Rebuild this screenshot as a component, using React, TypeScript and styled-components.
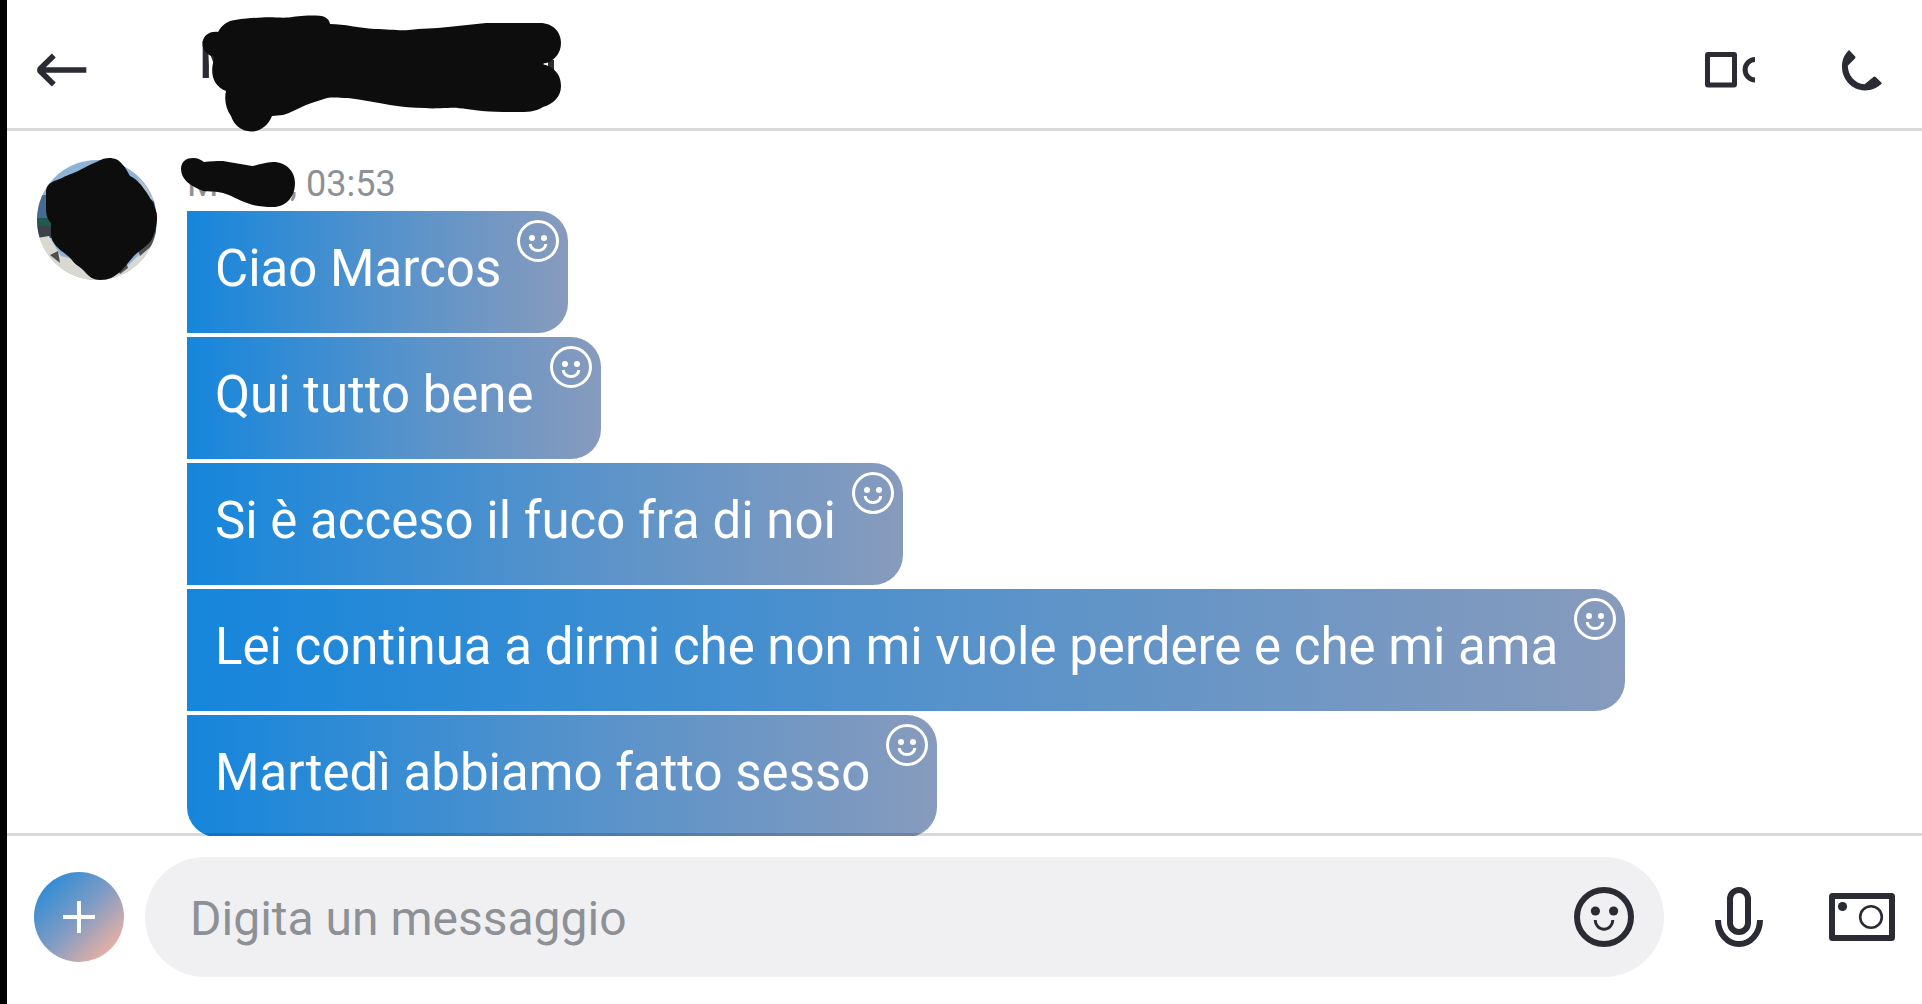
import React from "react";
import styled, { createGlobalStyle } from "styled-components";

const ink = "#2b2c33";
const muted = "#8d9095";
const marker = "#0d0d0d";

const GlobalStyle = createGlobalStyle`
  *, *::before, *::after { box-sizing: border-box; }
  body { margin: 0; background: #fff; font-family: Roboto, "Noto Sans", sans-serif; }
  button { padding: 0; border: 0; background: none; color: inherit; cursor: pointer; }
  svg { display: block; }
`;

const Screen = styled.div`
  display: flex;
  flex-direction: column;
  height: 100vh;
  overflow: hidden;
  border-left: 7px solid #000;
  color: ${ink};
`;

const Header = styled.header`
  display: flex;
  align-items: center;
  flex: none;
  height: 131px;
  padding: 12px 40px 0 30px;
  border-bottom: 3px solid #dadada;
`;

const IconButton = styled.button`
  display: flex;
  flex: none;
`;

const TitleBlock = styled.div`
  position: relative;
  flex: 1;
  margin-left: 112px;
  padding-bottom: 18px;
`;

const Title = styled.h1`
  margin: 0;
  font-size: 51px;
  line-height: 60px;
  font-weight: 500;
`;

const Actions = styled.div`
  display: flex;
  align-items: center;
  gap: 87px;
`;

const Redaction = styled.svg<{ $top: number; $left: number }>`
  position: absolute;
  top: ${(p) => p.$top}px;
  left: ${(p) => p.$left}px;
  fill: ${marker};
  pointer-events: none;
`;

const Conversation = styled.main`
  display: flex;
  align-items: flex-start;
  flex: 1;
  gap: 30px;
  min-height: 0;
  padding: 29px 30px 0;
  overflow: hidden;
`;

const Avatar = styled.svg`
  flex: none;
  width: 120px;
  height: 120px;
  overflow: visible;
`;

const Thread = styled.section`
  display: flex;
  flex-direction: column;
  align-items: flex-start;
  min-width: 0;
`;

const Meta = styled.div`
  position: relative;
  display: flex;
  margin-bottom: 3px;
  color: ${muted};
  font-size: 36px;
  line-height: 48px;
`;

const Sender = styled.span`
  width: 103px;
`;

const Bubbles = styled.ul`
  display: flex;
  flex-direction: column;
  align-items: flex-start;
  gap: 4px;
  margin: 0;
  padding: 0;
  list-style: none;
`;

const Bubble = styled.li`
  position: relative;
  padding: 0 67px 6px 28px;
  border-radius: 0 30px 30px 0;
  background: linear-gradient(90deg, #1586dc, #5592cb 52%, #879bbd);
  color: #fff;
  font-size: 51px;
  line-height: 116px;

  &:last-child { border-bottom-left-radius: 30px; }
`;

const ReactButton = styled.button`
  position: absolute;
  top: 9px;
  right: 9px;
`;

const Composer = styled.form`
  position: relative;
  display: flex;
  align-items: center;
  flex: none;
  margin-top: -3px;
  padding: 21px 27px 27px;
  border-top: 3px solid rgba(0, 0, 0, 0.15);
`;

const AddButton = styled.button`
  display: grid;
  place-items: center;
  flex: none;
  width: 90px;
  height: 90px;
  margin-right: 21px;
  border-radius: 50%;
  background: linear-gradient(135deg, #1586dc, #7f9cc4 50%, #e2afa5 85%);
`;

const Field = styled.div`
  display: flex;
  align-items: center;
  flex: 1;
  min-width: 0;
  height: 120px;
  padding: 0 30px 0 45px;
  border-radius: 60px;
  background: #f0f0f2;
`;

const MessageInput = styled.input`
  flex: 1;
  min-width: 0;
  height: 100%;
  padding: 3px 0 0;
  border: 0;
  outline: 0;
  background: none;
  color: ${ink};
  font-family: inherit;
  font-size: 48px;

  &::placeholder { color: ${muted}; opacity: 1; }
`;

const Tools = styled.div`
  display: flex;
  align-items: center;
  gap: 66px;
  margin-left: 51px;
`;

const messages = [
  "Ciao Marcos",
  "Qui tutto bene",
  "Si è acceso il fuco fra di noi",
  "Lei continua a dirmi che non mi vuole perdere e che mi ama",
  "Martedì abbiamo fatto sesso",
];

const BackIcon = () => (
  <svg width="50" height="34" fill="none" stroke={ink} strokeWidth="5.6">
    <path d="M49.3 17H4M16.8 2.4 3 16v2l13.8 13.6" strokeLinejoin="round" />
  </svg>
);

const VideoIcon = () => (
  <svg width="50" height="36" fill="none" stroke={ink} strokeWidth="5">
    <rect x="2.5" y="2.5" width="27" height="30.5" rx="0.5" />
    <path d="M50.3 7.5a10.2 10.2 0 0 0 0 20.4" />
  </svg>
);

const PhoneIcon = () => (
  <svg width="40" height="41" fill={ink}>
    <path d="M7 0 13.2 6.6Q13.8 7.4 13.2 8.2L5.8 15.8C6 25 12.5 33.8 22.6 34.3L31.4 27Q32.6 26.2 33.7 27L40 33.2C34.8 38.2 29.4 40.4 22.7 40.4 9.8 40 0 29.5 0 16.7 0 10 2.2 4.7 7 0Z" />
  </svg>
);

const ReactIcon = () => (
  <svg width="42" height="42" fill="none" stroke="#fff" strokeWidth="3">
    <circle cx="21" cy="21" r="19.5" />
    <circle cx="15" cy="18" r="3" fill="#fff" stroke="none" />
    <circle cx="27" cy="18" r="3" fill="#fff" stroke="none" />
    <path d="M13.2 24a7.8 6.5 0 0 0 15.6 0" />
  </svg>
);

const EmojiIcon = () => (
  <svg width="60" height="60" fill="none" stroke={ink} strokeWidth="6">
    <circle cx="30" cy="30" r="27" />
    <circle cx="21.4" cy="24" r="4.6" fill={ink} stroke="none" />
    <circle cx="39.6" cy="24" r="4.6" fill={ink} stroke="none" />
    <path d="M21.2 33a8.8 9.2 0 0 0 17.6 0" strokeWidth="3" />
  </svg>
);

const MicIcon = () => (
  <svg width="48" height="60" fill="none" stroke={ink} strokeWidth="6">
    <rect x="15" y="3" width="18" height="42" rx="9" />
    <path d="M3 33a21 24 0 0 0 42 0" />
  </svg>
);

const CameraIcon = () => (
  <svg width="66" height="48" fill="none" stroke={ink}>
    <rect x="3" y="3" width="60" height="42" rx="0.5" strokeWidth="6" />
    <circle cx="13.5" cy="13.5" r="4.6" fill={ink} stroke="none" />
    <circle cx="42" cy="24" r="10.8" strokeWidth="2.6" />
  </svg>
);

export default function App() {
  return (
    <>
      <GlobalStyle />
      <Screen>
        <Header>
          <IconButton aria-label="Indietro"><BackIcon /></IconButton>
          <TitleBlock>
            <Title>M</Title>
            <Redaction $top={-16} $left={3} width="360" height="118" viewBox="202 15 360 118">
              <path d="M548 60h6v10h-6z" fill={ink} />
              <path d="M202.5 44C202.500 36 209 31 218 32C222 25 227 21 235 20C246 18 254 18 262 17.500C273 17 280 18 289 17.500C298 16 305 15.500 314 15.500C324 15 329 18 330 24C345 24 358 28 375 29C389 29 398 31 409 30C422 28 434 29 448 27C461 26 473 24 486 23H540C553 23 561 32 561 43C561 53 555 59 549 62L544 64L549 66.500C556 70 561 76 561 86C561 97 553 104 543 107C535 112 527 112 517 112C505 112 494 112 482 111C469 110 459 107 448 108C439 108 433 109 425 108C413 108 402 107 390 105C375 102 363 100 348 98C340 98 334 97 327 98C320 100 312 103 306 105C297 109 290 113 283 115L272 116C268 126 260 131.500 251 131.500C241 131 234 125 231 116C226 109 224 100 226 91C215 87 211 77 212.500 66L214 57C207 55 202.500 50 202.500 44Z" />
              <path d="M543 64q2-1.500 4 0-2 1.500-4 0Z" fill="#fff" />
            </Redaction>
          </TitleBlock>
          <Actions>
            <IconButton aria-label="Videochiamata"><VideoIcon /></IconButton>
            <IconButton aria-label="Chiamata"><PhoneIcon /></IconButton>
          </Actions>
        </Header>

        <Conversation>
          <Avatar viewBox="37 160 120 120" role="img" aria-label="Foto profilo">
            <defs>
              <clipPath id="avatar"><circle cx="97" cy="220" r="60" /></clipPath>
            </defs>
            <g clipPath="url(#avatar)">
              <path fill="#8fb3d6" d="M37 160h120v120H37z" />
              <path fill="#456b91" d="M37 195h20v26H37z" />
              <path fill="#1e5a50" d="M37 218h18v8H37z" />
              <path fill="#3c4149" d="M37 226h20v12H37z" />
              <path fill="#d9d9d2" d="M37 238l12-2 12 20 60 16 34-32v40H37z" />
              <path fill="#4d4f50" d="M50 255l8-4 2 12zM118 270l8-8 2 6-8 6zM138 250l18-22v14l-16 14z" />
              <path fill="#b7c0cc" d="M137 176l10 12 6 12-6-2z" />
              <path fill="#252d6b" d="M149 198l5 4 2 12-5-2z" />
              <path fill="#c5332f" d="M155 212h3v8h-3z" />
            </g>
            <path fill={marker} d="M109 158C115 158 119 160 122 164C126 168 127 171 130 176C138 180 142 186 147 193C151 200 156 206 157 217C157 226 155 233 152 239C148 246 138 251 133 257C128 263 124 268 120 272C114 277 109 280 100 280C94 280 89 277 85 272C81 267 75 265 72 260C66 253 58 250 54 243C50 238 51 231 51 223C47 219 46 214 46 208V193C46 187 48 184 54 181C61 179 65 176 71 174C79 171 87 166 94 163C99 161 103 158 109 158Z" />
          </Avatar>
          <Thread>
            <Meta>
              <Sender>M</Sender>
              <span>, </span>
              <time>&nbsp;03:53</time>
              <Redaction $top={-3} $left={-6} width="116" height="52" viewBox="181 157 116 52">
                <path d="M181 169C181 161 187 158 193 158C198 158 201 160 204 162C210 161 217 161 223 161C232 163 243 164 252 166C259 165 265 162 273 162C287 162 295 172 295 183C295 197 286 207 273 207C263 207 254 206 247 203C238 200 231 195 223 193C216 191 210 192 203 191C190 186 181 179 181 169Z" />
              </Redaction>
            </Meta>
            <Bubbles>
              {messages.map((text) => (
                <Bubble key={text}>
                  {text}
                  <ReactButton aria-label="Aggiungi reazione"><ReactIcon /></ReactButton>
                </Bubble>
              ))}
            </Bubbles>
          </Thread>
        </Conversation>

        <Composer onSubmit={(e) => e.preventDefault()}>
          <AddButton type="button" aria-label="Aggiungi">
            <svg width="32" height="32" stroke="#fff" strokeWidth="4">
              <path d="M16 0v32M0 16h32" />
            </svg>
          </AddButton>
          <Field>
            <MessageInput type="text" aria-label="Digita un messaggio" placeholder="Digita un messaggio" />
            <IconButton type="button" aria-label="Emoji"><EmojiIcon /></IconButton>
          </Field>
          <Tools>
            <IconButton type="button" aria-label="Messaggio vocale"><MicIcon /></IconButton>
            <IconButton type="button" aria-label="Fotocamera"><CameraIcon /></IconButton>
          </Tools>
        </Composer>
      </Screen>
    </>
  );
}
